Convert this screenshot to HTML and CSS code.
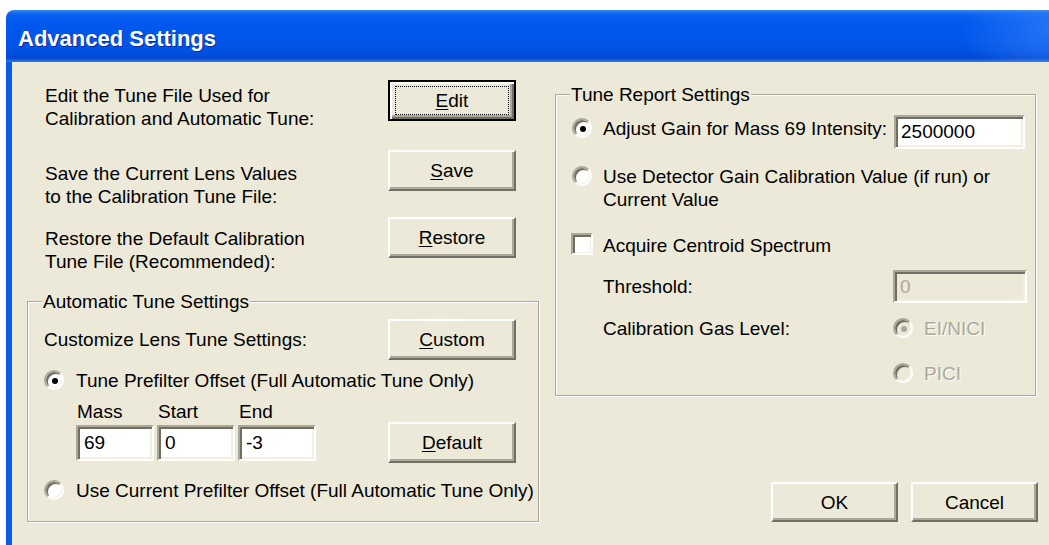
FILE: index.html
```html
<!DOCTYPE html>
<html lang="en">
<head>
<meta charset="utf-8">
<title>Advanced Settings</title>
<link rel="stylesheet" href="styles.css">
</head>
<body>
<div class="screen">
  <div class="window">
    <div class="titlebar"><span class="title">Advanced Settings</span></div>
    <div class="client">
      <div class="col col-left">
        <div class="task task-edit">
          <div class="task-text">Edit the Tune File Used for<br>Calibration and Automatic Tune:</div>
          <button class="btn btn-default" type="button"><span class="focus"><u>E</u>dit</span></button>
        </div>
        <div class="task task-save">
          <div class="task-text">Save the Current Lens Values<br>to the Calibration Tune File:</div>
          <button class="btn" type="button"><u>S</u>ave</button>
        </div>
        <div class="task task-restore">
          <div class="task-text">Restore the Default Calibration<br>Tune File (Recommended):</div>
          <button class="btn" type="button"><u>R</u>estore</button>
        </div>

        <fieldset class="group group-auto">
          <legend>Automatic Tune Settings</legend>
          <div class="line-custom">
            <span class="line-label">Customize Lens Tune Settings:</span>
            <button class="btn" type="button"><u>C</u>ustom</button>
          </div>
          <div class="option option-prefilter"><span class="radio checked"></span><span class="option-text">Tune Prefilter Offset (Full Automatic Tune Only)</span></div>
          <div class="offsets">
            <div class="offset-grid">
              <span class="offset-label">Mass</span>
              <span class="offset-label">Start</span>
              <span class="offset-label">End</span>
              <input class="field" type="text" value="69">
              <input class="field" type="text" value="0">
              <input class="field" type="text" value="-3">
            </div>
            <button class="btn btn-low" type="button"><u>D</u>efault</button>
          </div>
          <div class="option option-current"><span class="radio"></span><span class="option-text">Use Current Prefilter Offset (Full Automatic Tune Only)</span></div>
        </fieldset>
      </div>

      <div class="col col-right">
        <fieldset class="group group-report">
          <legend>Tune Report Settings</legend>
          <div class="option option-gain">
            <span class="radio checked"></span>
            <span class="option-text">Adjust Gain for Mass 69 Intensity:</span>
            <input class="field field-gain" type="text" value="2500000">
          </div>
          <div class="option option-detector"><span class="radio"></span><span class="option-text">Use Detector Gain Calibration Value (if run) or<br>Current Value</span></div>
          <div class="option option-centroid"><span class="checkbox"></span><span class="option-text">Acquire Centroid Spectrum</span></div>
          <div class="sub sub-threshold">
            <span class="sub-label">Threshold:</span>
            <input class="field field-threshold" type="text" value="0" disabled>
          </div>
          <div class="sub sub-gas">
            <span class="sub-label">Calibration Gas Level:</span>
            <span class="radio disabled checked"></span><span class="disabled-text">EI/NICI</span>
          </div>
          <div class="sub sub-pici">
            <span class="radio disabled"></span><span class="disabled-text">PICI</span>
          </div>
        </fieldset>
        <div class="actions">
          <button class="btn btn-action" type="button">OK</button>
          <button class="btn btn-action" type="button">Cancel</button>
        </div>
      </div>
    </div>
  </div>
</div>
</body>
</html>
```

FILE: styles.css
```css
* { box-sizing: border-box; }

html, body {
  margin: 0;
  padding: 0;
  background: #ffffff;
  overflow: hidden;
}

body {
  width: 1049px;
  height: 545px;
  font-family: "Liberation Sans", Arial, sans-serif;
  font-size: 19px;
  line-height: 23px;
  color: #000;
}

.screen {
  padding: 10px 0 0 6px;
  height: 545px;
}

.window {
  width: 1043px;
  height: 535px;
  display: flex;
  flex-direction: column;
}

/* Luna-style caption bar */
.titlebar {
  height: 52px;
  flex: none;
  border-radius: 8px 0 0 0;
  padding: 16px 0 0 12px;
  background:
    radial-gradient(ellipse 90px 60px at 100% 40%, rgba(80, 150, 255, 0.45), rgba(80, 150, 255, 0) 100%),
    linear-gradient(180deg, #3d8cf6 0px, #1a70f2 2px, #0a60ee 5px, #0058ee 12px, #0055ea 30px, #0051e2 42px, #0046d0 48px, #2a6ae0 51px, #3a78e6 52px);
}

.title {
  display: block;
  font-family: "Liberation Sans", Arial, sans-serif;
  font-weight: bold;
  font-size: 22px;
  line-height: 26px;
  color: #fff;
  text-shadow: 1px 1px 0 #0a2a9a;
}

.client {
  flex: 1;
  display: flex;
  gap: 16px;
  background: #ece9d8;
  border-left: 6px solid #0a5ae6;
  padding: 18px 0 0 15px;
}

.col-left {
  width: 512px;
  flex: none;
}

.col-right {
  width: 481px;
  flex: none;
  display: flex;
  flex-direction: column;
}

/* Task rows with a command button on the right */
.task {
  display: flex;
  align-items: flex-start;
  padding-left: 18px;
}

.task-text {
  width: 343px;
  flex: none;
}

.task-edit .task-text { margin-top: 4px; }
.task-save { margin-top: 20px; }
.task-save .task-text { margin-top: 12px; }
.task-restore { margin-top: 9px; }
.task-restore .task-text { margin-top: 10px; }

/* Classic 3D push button */
.btn {
  width: 128px;
  height: 41px;
  flex: none;
  padding: 0;
  margin: 0;
  font: inherit;
  color: #000;
  background: #ece9d8;
  border: 2px solid;
  border-color: #ffffff #716f64 #716f64 #ffffff;
  box-shadow: inset -2px -2px 0 #aca899;
  display: flex;
  align-items: center;
  justify-content: center;
}

.btn u { text-decoration: underline; text-underline-offset: 2px; }

.btn-default {
  border: 2px solid #000;
  box-shadow: inset 2px 2px 0 #ffffff, inset -2px -2px 0 #716f64, inset -4px -4px 0 #aca899;
}

.btn-default .focus {
  display: flex;
  align-items: center;
  justify-content: center;
  width: 114px;
  height: 29px;
  border: 1px dotted #000;
}

/* Etched group boxes */
.group {
  margin: 0;
  border: 1px solid #aca899;
  box-shadow: inset 1px 1px 0 #ffffff, 1px 1px 0 #ffffff;
  min-width: 0;
}

.group legend {
  padding: 0 1px;
  margin-left: -2px;
  background: #ece9d8;
  line-height: 23px;
}

.group-auto {
  margin-top: 17px;
  padding: 0 16px 19px 16px;
}

.line-custom {
  margin-top: 6px;
  display: flex;
  align-items: baseline;
}

.line-label {
  width: 344px;
  flex: none;
}

/* Radio / checkbox options */
.option {
  display: flex;
  align-items: flex-start;
}

.option-text { white-space: nowrap; }

.radio {
  width: 20px;
  height: 20px;
  flex: none;
  border-radius: 50%;
  background: #ffffff;
  border: 2px solid;
  border-color: #aca899 #ffffff #ffffff #aca899;
  box-shadow: inset 2px 2px 0 #716f64, inset -1px -1px 0 #f1efe2;
  margin: 1px 12px 0 0;
  display: flex;
  align-items: center;
  justify-content: center;
}

.radio.checked::after {
  content: "";
  width: 6px;
  height: 6px;
  border-radius: 50%;
  background: #000;
  margin: 1px 0 0 1px;
}

.radio.disabled {
  background: #ece9d8;
}

.radio.disabled.checked::after {
  background: #aca899;
}

.checkbox {
  width: 22px;
  height: 22px;
  flex: none;
  background: #ffffff;
  border: 2px solid;
  border-color: #aca899 #ffffff #ffffff #aca899;
  box-shadow: inset 2px 2px 0 #716f64, inset -1px -1px 0 #f1efe2;
  margin: -1px 10px 0 -1px;
}

.option-prefilter { margin-top: 9px; }
.option-current { margin-top: 18px; }

/* Prefilter offset entry */
.offsets {
  margin-top: 8px;
  display: flex;
  align-items: flex-end;
  gap: 72px;
  padding-left: 32px;
}

.offset-grid {
  display: grid;
  grid-template-columns: 78px 78px 78px;
  grid-template-rows: 23px 36px;
  column-gap: 3px;
  row-gap: 2px;
}

.offset-label { padding-left: 1px; }

.btn-low { margin-bottom: -2px; }

/* Sunken edit fields */
.field {
  font: inherit;
  color: #000;
  height: 36px;
  width: 78px;
  margin: 0;
  padding: 0 4px 0 6px;
  background: #ffffff;
  border: 2px solid;
  border-color: #aca899 #ffffff #ffffff #aca899;
  box-shadow: inset 2px 2px 0 #716f64, inset -2px -2px 0 #f1efe2;
  outline: none;
}

.field-gain {
  width: 131px;
  height: 34px;
  margin-left: auto;
  margin-right: 1px;
  padding-left: 5px;
}

.field-threshold {
  width: 134px;
  height: 33px;
  padding-left: 5px;
  background: #ece9d8;
  color: #aca899;
  -webkit-text-fill-color: #aca899;
  opacity: 1;
}

/* Tune report group */
.group-report {
  margin-top: 3px;
  padding: 0 9px 10px 16px;
}

.option-gain { margin-top: 9px; }
.option-gain .radio { margin-top: 3px; margin-right: 11px; }
.option-gain .option-text { margin-top: 2px; }

.option-detector { margin-top: 16px; }
.option-detector .radio { margin-right: 11px; }
.option-centroid { margin-top: 23px; }

.sub {
  display: flex;
  align-items: flex-start;
  padding-left: 31px;
}

.sub-label {
  width: 290px;
  flex: none;
}

.sub-threshold {
  margin-top: 13px;
  align-items: center;
}

.sub-gas { margin-top: 14px; }
.sub-gas .radio, .sub-pici .radio { margin-right: 11px; }

.sub-pici {
  margin-top: 22px;
  padding-left: 321px;
}

.disabled-text {
  color: #aca899;
  text-shadow: 1px 1px 0 #ffffff;
}

/* Dialog buttons */
.actions {
  margin-top: 86px;
  margin-right: -2px;
  display: flex;
  justify-content: flex-end;
  gap: 13px;
}

.btn-action {
  width: 127px;
  height: 40px;
}
```
